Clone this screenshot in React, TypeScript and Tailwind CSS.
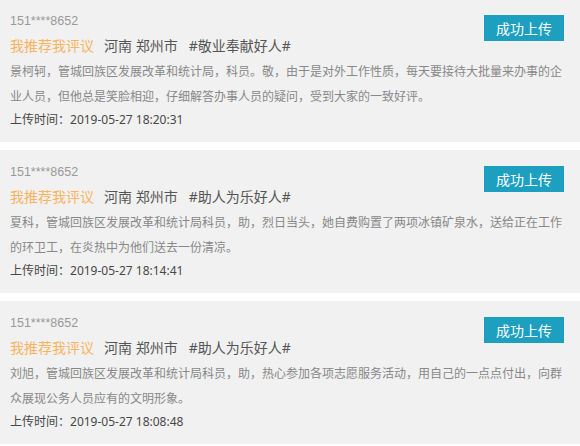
import React from "react";

type Item = {
  phone: string;
  tag: string;
  body: string;
  time: string;
};

const items: Item[] = [
  {
    phone: "151****8652",
    tag: "#敬业奉献好人#",
    body: "景柯轲，管城回族区发展改革和统计局，科员。敬，由于是对外工作性质，每天要接待大批量来办事的企业人员，但他总是笑脸相迎，仔细解答办事人员的疑问，受到大家的一致好评。",
    time: "2019-05-27 18:20:31",
  },
  {
    phone: "151****8652",
    tag: "#助人为乐好人#",
    body: "夏科，管城回族区发展改革和统计局科员，助，烈日当头，她自费购置了两项冰镇矿泉水，送给正在工作的环卫工，在炎热中为他们送去一份清凉。",
    time: "2019-05-27 18:14:41",
  },
  {
    phone: "151****8652",
    tag: "#助人为乐好人#",
    body: "刘旭，管城回族区发展改革和统计局科员，助，热心参加各项志愿服务活动，用自己的一点点付出，向群众展现公务人员应有的文明形象。",
    time: "2019-05-27 18:08:48",
  },
];

function Card({ item }: { item: Item }) {
  return (
    <div className="h-[143px] shrink-0 bg-[#f1f1f1] pl-[10px] pr-[16px] pt-[10px]">
      <div className="flex h-[24px] items-start justify-between">
        <span className="font-['Liberation_Sans',sans-serif] text-[12.5px] leading-[24px] text-[#999]">
          {item.phone}
        </span>
        <div className="mt-[6px] flex h-[26px] w-[80px] items-center justify-center bg-[#1d9fc0] text-[14px] text-white">
          成功上传
        </div>
      </div>
      <div className="flex text-[14px] leading-[26px]">
        <span className="text-[#fab35f]">我推荐我评议</span>
        <span className="ml-[10px] text-[#555]">河南 郑州市</span>
        <span className="ml-[11px] text-[#555]">{item.tag}</span>
      </div>
      <p className="h-[50px] w-[554px] text-[12px] leading-[25px] text-[#888]">{item.body}</p>
      <div className="text-[12px] leading-[22px] text-[#484848]">上传时间：{item.time}</div>
    </div>
  );
}

export default function App() {
  return (
    <div
      className="h-[446px] w-[580px] overflow-hidden bg-white"
      style={{ fontFamily: '"Noto Sans", "Noto Sans CJK SC", sans-serif' }}
    >
      <div className="-mt-px flex flex-col gap-[8px]">
        {items.map((it, i) => (
          <Card key={i} item={it} />
        ))}
      </div>
    </div>
  );
}
